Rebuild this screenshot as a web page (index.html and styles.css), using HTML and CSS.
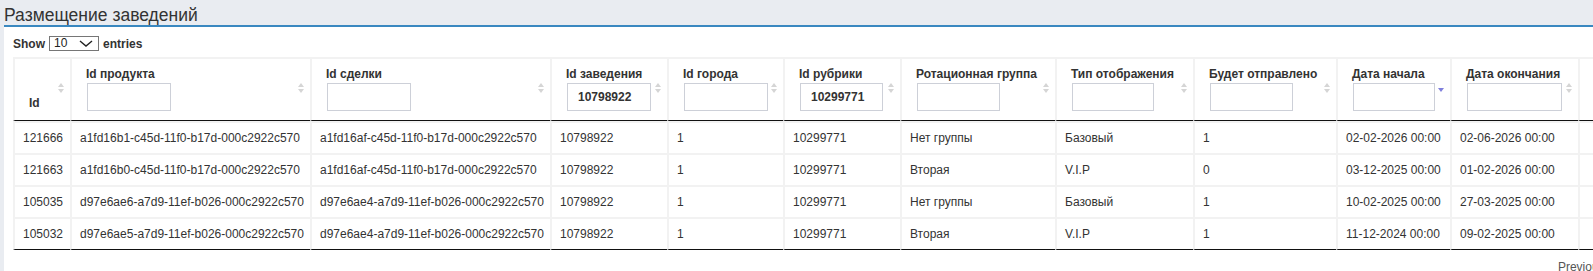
FILE: index.html
```html
<!DOCTYPE html>
<html lang="ru">
<head>
<meta charset="utf-8">
<title>Размещение заведений</title>
<link rel="stylesheet" href="styles.css">
</head>
<body>
<div class="page">
  <h1 class="title">Размещение заведений</h1>
  <div class="panel">
    <div class="wrap">
      <div class="length">
        <span>Show</span>
        <span class="sel">
          <select class="sel-box"><option>10</option><option>25</option><option>50</option></select>
          <svg class="sel-chev" width="14" height="7" viewBox="0 0 14 7"><polyline points="1,1 7,6 13,1" fill="none" stroke="#222" stroke-width="1.4"/></svg>
        </span>
        <span>entries</span>
      </div>
      <table class="grid">
        <thead>
          <tr>
            <th class="c-id"><div class="thc"><span class="lbl lbl-bottom">Id</span><svg class="sort" width="6" height="10" viewBox="0 0 6 10"><path d="M3 0 L6 4 L0 4 Z M0 6 L6 6 L3 10 Z" fill="#d5d5d5"/></svg></div></th>
            <th class="c-uuid"><div class="thc"><div class="lbl"><div>Id продукта</div><input class="flt" type="text"></div><svg class="sort" width="6" height="10" viewBox="0 0 6 10"><path d="M3 0 L6 4 L0 4 Z M0 6 L6 6 L3 10 Z" fill="#d5d5d5"/></svg></div></th>
            <th class="c-uuid"><div class="thc"><div class="lbl"><div>Id сделки</div><input class="flt" type="text"></div><svg class="sort" width="6" height="10" viewBox="0 0 6 10"><path d="M3 0 L6 4 L0 4 Z M0 6 L6 6 L3 10 Z" fill="#d5d5d5"/></svg></div></th>
            <th class="c-zav"><div class="thc"><div class="lbl"><div>Id заведения</div><input class="flt" type="text" value="10798922"></div><svg class="sort" width="6" height="10" viewBox="0 0 6 10"><path d="M3 0 L6 4 L0 4 Z M0 6 L6 6 L3 10 Z" fill="#d5d5d5"/></svg></div></th>
            <th class="c-city"><div class="thc"><div class="lbl"><div>Id города</div><input class="flt" type="text"></div><svg class="sort" width="6" height="10" viewBox="0 0 6 10"><path d="M3 0 L6 4 L0 4 Z M0 6 L6 6 L3 10 Z" fill="#d5d5d5"/></svg></div></th>
            <th class="c-rub"><div class="thc"><div class="lbl"><div>Id рубрики</div><input class="flt flt-83" type="text" value="10299771"></div><svg class="sort" width="6" height="10" viewBox="0 0 6 10"><path d="M3 0 L6 4 L0 4 Z M0 6 L6 6 L3 10 Z" fill="#d5d5d5"/></svg></div></th>
            <th class="c-rot"><div class="thc"><div class="lbl"><div>Ротационная группа</div><input class="flt flt-83" type="text"></div><svg class="sort" width="6" height="10" viewBox="0 0 6 10"><path d="M3 0 L6 4 L0 4 Z M0 6 L6 6 L3 10 Z" fill="#d5d5d5"/></svg></div></th>
            <th class="c-type"><div class="thc"><div class="lbl"><div>Тип отображения</div><input class="flt flt-82" type="text"></div><svg class="sort" width="6" height="10" viewBox="0 0 6 10"><path d="M3 0 L6 4 L0 4 Z M0 6 L6 6 L3 10 Z" fill="#d5d5d5"/></svg></div></th>
            <th class="c-sent"><div class="thc"><div class="lbl"><div>Будет отправлено</div><input class="flt flt-83" type="text"></div><svg class="sort" width="6" height="10" viewBox="0 0 6 10"><path d="M3 0 L6 4 L0 4 Z M0 6 L6 6 L3 10 Z" fill="#d5d5d5"/></svg></div></th>
            <th class="c-start"><div class="thc"><div class="lbl"><div>Дата начала</div><input class="flt flt-82" type="text"></div><svg class="sort sort-desc" width="6" height="10" viewBox="0 0 6 10"><path d="M0 5 L6 5 L3 9 Z" fill="#7f7fdc"/></svg></div></th>
            <th class="c-end"><div class="thc"><div class="lbl"><div>Дата окончания</div><input class="flt flt-95" type="text"></div><svg class="sort" width="6" height="10" viewBox="0 0 6 10"><path d="M3 0 L6 4 L0 4 Z M0 6 L6 6 L3 10 Z" fill="#d5d5d5"/></svg></div></th>
            <th class="c-last"></th>
          </tr>
        </thead>
        <tbody>
          <tr><td>121666</td><td>a1fd16b1-c45d-11f0-b17d-000c2922c570</td><td>a1fd16af-c45d-11f0-b17d-000c2922c570</td><td>10798922</td><td>1</td><td>10299771</td><td>Нет группы</td><td>Базовый</td><td>1</td><td>02-02-2026 00:00</td><td>02-06-2026 00:00</td><td></td></tr>
          <tr><td>121663</td><td>a1fd16b0-c45d-11f0-b17d-000c2922c570</td><td>a1fd16af-c45d-11f0-b17d-000c2922c570</td><td>10798922</td><td>1</td><td>10299771</td><td>Вторая</td><td>V.I.P</td><td>0</td><td>03-12-2025 00:00</td><td>01-02-2026 00:00</td><td></td></tr>
          <tr><td>105035</td><td>d97e6ae6-a7d9-11ef-b026-000c2922c570</td><td>d97e6ae4-a7d9-11ef-b026-000c2922c570</td><td>10798922</td><td>1</td><td>10299771</td><td>Нет группы</td><td>Базовый</td><td>1</td><td>10-02-2025 00:00</td><td>27-03-2025 00:00</td><td></td></tr>
          <tr><td>105032</td><td>d97e6ae5-a7d9-11ef-b026-000c2922c570</td><td>d97e6ae4-a7d9-11ef-b026-000c2922c570</td><td>10798922</td><td>1</td><td>10299771</td><td>Вторая</td><td>V.I.P</td><td>1</td><td>11-12-2024 00:00</td><td>09-02-2025 00:00</td><td></td></tr>
        </tbody>
      </table>
      <div class="paging">
        <a class="pbtn">Previous</a>
        <a class="pbtn pcur">1</a>
        <a class="pbtn">Next</a>
      </div>
    </div>
  </div>
</div>
</body>
</html>
```
FILE: styles.css
```css
html, body {
  margin: 0;
  padding: 0;
  overflow: hidden;
  background: #e9ecf1;
}
body {
  font-family: "Liberation Sans", Arial, sans-serif;
  color: #333;
  height: 271px;
}
.page {
  padding-left: 4px;
  height: 100%;
  display: flex;
  flex-direction: column;
}
.title {
  margin: 0;
  padding: 5px 0 0 0;
  font-size: 17.5px;
  line-height: 20px;
  font-weight: normal;
  color: #333;
  white-space: nowrap;
}
.panel {
  flex: 1;
  background: #fff;
  border-top: 2px solid #3a88c0;
  overflow: hidden;
  padding: 9px 0 0 9px;
}
.wrap {
  width: max-content;
}
.length {
  display: flex;
  align-items: center;
  gap: 4px;
  height: 15px;
  font-size: 12px;
  font-weight: bold;
  color: #333;
}
.sel {
  position: relative;
  display: inline-block;
  height: 15px;
}
.sel-box {
  appearance: none;
  -webkit-appearance: none;
  box-sizing: border-box;
  width: 50px;
  height: 15px;
  margin: 0;
  padding: 0 0 0 4px;
  border: 1px solid #767676;
  border-radius: 0;
  background: #fff;
  font-family: "Liberation Sans", Arial, sans-serif;
  font-size: 12px;
  line-height: 13px;
  color: #222;
  display: block;
}
.sel-chev {
  position: absolute;
  left: 30px;
  top: 4px;
  pointer-events: none;
}
.grid {
  margin-top: 6px;
  border-collapse: separate;
  border-spacing: 0;
  table-layout: fixed;
  width: 1692px;
  font-size: 12px;
}
.grid th,
.grid td {
  box-sizing: border-box;
  border-left: 2px solid #f2f2f2;
}
.grid th:last-child,
.grid td:last-child {
  border-right: 2px solid #f2f2f2;
}
.grid th {
  border-top: 2px solid #f2f2f2;
  border-bottom: 1px solid #111;
  padding: 8px 6px 9px 14px;
  text-align: left;
  vertical-align: top;
  font-weight: bold;
  line-height: 14px;
  color: #333;
}
.thc {
  display: flex;
  justify-content: space-between;
  align-items: center;
  height: 44px;
}
.lbl {
  white-space: nowrap;
}
.lbl-bottom {
  align-self: flex-end;
  margin-bottom: 1px;
}
.sort {
  flex: none;
  display: block;
  margin-bottom: 2px;
}
.flt {
  display: block;
  box-sizing: border-box;
  width: 84px;
  height: 28px;
  margin: 2px 0 0 1px;
  padding: 0 0 0 10px;
  border: 1px solid #cdd0d8;
  border-radius: 0;
  background: #fff;
  font-family: "Liberation Sans", Arial, sans-serif;
  font-size: 12px;
  font-weight: bold;
  color: #333;
  outline: none;
}
.flt-83 { width: 83px; }
.flt-82 { width: 82px; }
.flt-95 { width: 95px; }
.c-id { width: 57px; }
.c-uuid { width: 240px; }
.c-zav { width: 117px; }
.c-city { width: 116px; }
.c-rub { width: 117px; }
.c-rot { width: 155px; }
.c-type { width: 138px; }
.c-sent { width: 143px; }
.c-start { width: 114px; }
.c-end { width: 128px; }
.c-last { width: 127px; }
.grid td {
  border-top: 2px solid #f2f2f2;
  padding: 8px 8px;
  line-height: 14px;
  color: #333;
  white-space: nowrap;
  vertical-align: middle;
}
.grid tbody tr:last-child td {
  border-bottom: 1px solid #111;
}
.paging {
  display: flex;
  justify-content: flex-end;
  padding-top: 3px;
  font-size: 12px;
  color: #555;
}
.pbtn {
  padding: 6px 12px;
  margin-left: 2px;
  line-height: 14px;
  color: #555;
  border: 1px solid transparent;
}
.pcur {
  border: 1px solid #cacaca;
  background: #f4f4f4;
  color: #333;
}
```
